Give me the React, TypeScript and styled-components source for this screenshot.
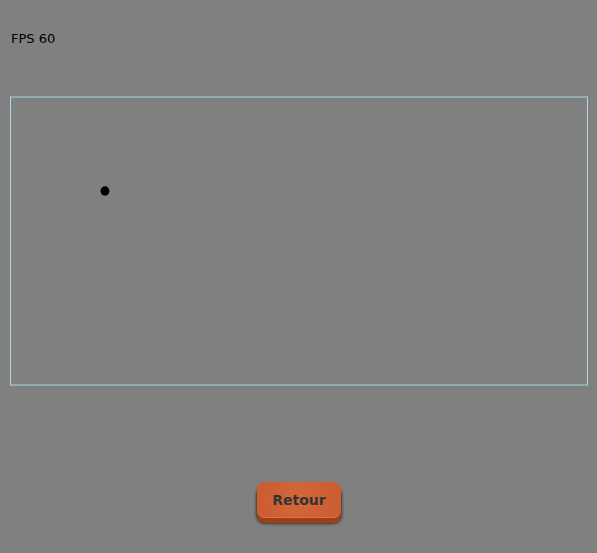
import React from "react";
import styled, { createGlobalStyle } from "styled-components";

const GlobalStyle = createGlobalStyle`
  * { box-sizing: border-box; }
  body {
    margin: 0;
    background: #808080;
    font-family: "DejaVu Sans", Verdana, sans-serif;
  }
`;

const Page = styled.main`
  display: flex;
  flex-direction: column;
  min-height: 100vh;
  padding: 31px 9px 35px 10px;
`;

const FpsCounter = styled.p`
  margin: 0 1px 49px;
  font-size: 13px;
  line-height: 16px;
  color: #000;
`;

const Arena = styled.section`
  border: solid;
  border-width: 2px 1px;
  border-color: #93abb3 #add8e6;
  aspect-ratio: 578 / 290;
`;

const Scene = styled.svg`
  display: block;
  width: 100%;
  height: 100%;
`;

const BackButton = styled.button`
  align-self: center;
  margin-top: auto;
  padding: 8px 15px;
  border: 0;
  border-radius: 8px;
  background: radial-gradient(circle, #d4683a, #cb5a31);
  box-shadow: inset 0 -1px 0 #dc7046, 0 5px 0 #a03f12, 0 5px 3px 1px rgba(0, 0, 0, 0.6);
  font: bold 14px/20px "DejaVu Sans", Verdana, sans-serif;
  color: #333;
  cursor: pointer;
`;

export default function App() {
  return (
    <>
      <GlobalStyle />
      <Page>
        <FpsCounter>FPS 60</FpsCounter>
        <Arena aria-label="Simulation">
          <Scene viewBox="0 0 576 286">
            <ellipse cx="94" cy="93" rx="4.5" ry="4.7" fill="#000" />
          </Scene>
        </Arena>
        <BackButton type="button">Retour</BackButton>
      </Page>
    </>
  );
}
